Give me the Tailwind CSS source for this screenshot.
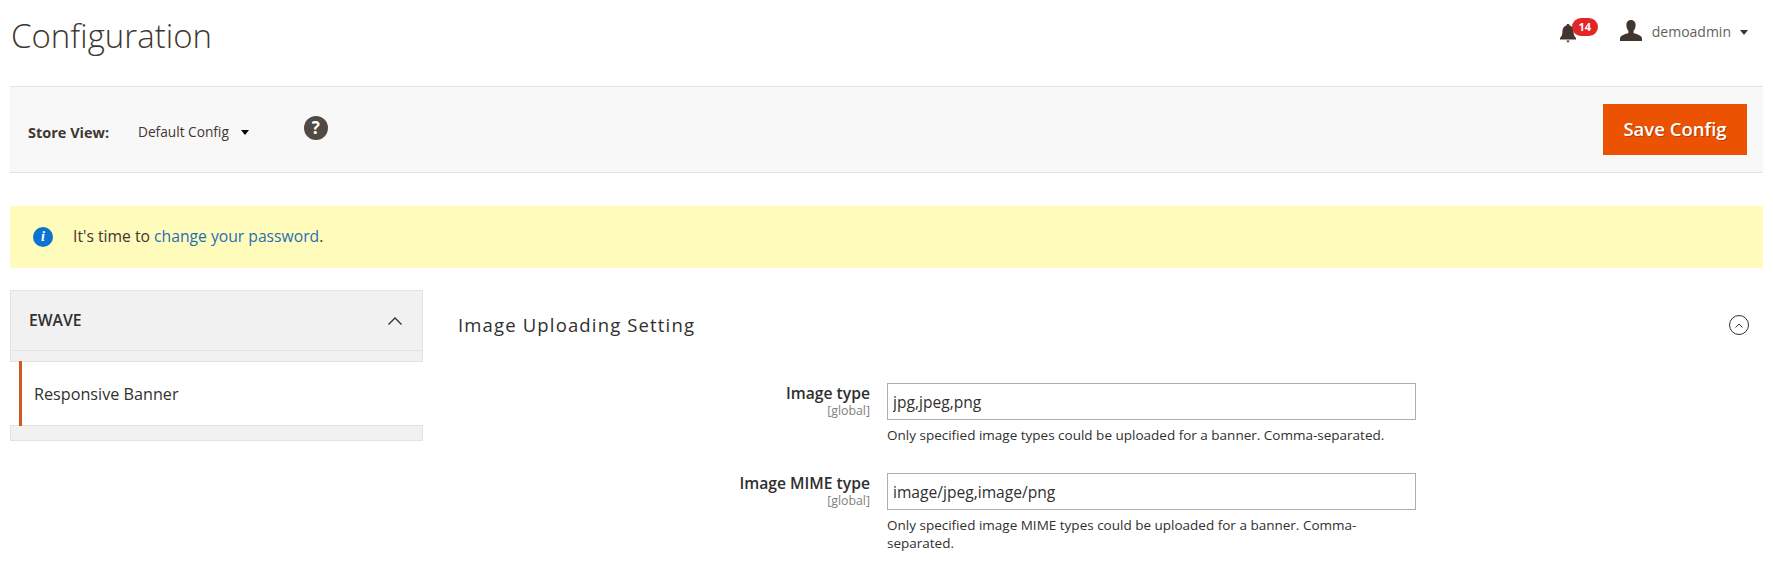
<!DOCTYPE html>
<html lang="en">
  <head>
    <meta charset="UTF-8" />
    <title>Configuration</title>
    <script src="https://cdn.jsdelivr.net/npm/@tailwindcss/browser@4"></script>
  </head>
  <body class="bg-white font-['Open_Sans',sans-serif] text-[#303030] overflow-hidden">
    <div class="w-[1773px] h-[572px] px-[10px]">
      <!-- Page header -->
      <header class="h-[86px] flex justify-between">
        <h1 class="pl-px pt-[13px] text-[33px] leading-[46px] font-light text-[#41362f]">Configuration</h1>
        <div class="flex items-start pt-[18px] pr-[15px]">
          <div class="relative w-[38px] h-[26px] mr-[22px]">
            <svg class="absolute left-0 top-[6px] w-4 h-[19px]" viewBox="0 0 16 19" fill="#41362f">
              <path d="M8 0c1 0 1.600.7 1.600 1.500C12.300 2.300 13.600 4.500 13.600 7.500c0 3.500.8 5 2.400 6.500v1.500H0V14c1.600-1.500 2.400-3 2.400-6.500 0-3 1.300-5.200 4-6C6.400.7 7 0 8 0zM6.200 16.500h3.600L8 18.800z" />
            </svg>
            <span class="absolute left-3 top-0 w-[26px] h-[18px] rounded-full bg-[#e22626] text-white text-[11px] leading-[18px] font-bold text-center">14</span>
          </div>
          <svg class="w-[22px] h-[21px] mt-[2px]" viewBox="0 0 22 21" fill="#41362f">
            <path d="M11 0c3 0 4.600 2.200 4.600 5.200 0 2.200-.8 4.300-2 5.500v2.200c2.400 1.100 8.400 2.200 8.400 5.500V21H0v-2.600c0-3.300 6-4.400 8.400-5.500v-2.200c-1.200-1.200-2-3.300-2-5.500C6.400 2.200 8 0 11 0z" />
          </svg>
          <span class="ml-[10px] mt-[4px] text-sm leading-[19px] text-[#676056]">demoadmin</span>
          <span class="ml-[9px] mt-[12px] w-0 h-0 border-x-[4.500px] border-x-transparent border-t-[5px] border-t-[#41362f]"></span>
        </div>
      </header>

      <!-- Action bar -->
      <div class="h-[87px] flex items-center justify-between bg-[#f8f8f8] border-y border-[#e3e3e3] pl-[18px] pr-[16px]">
        <div class="flex items-center">
          <span class="mt-[6px] text-[14.500px] font-bold text-[#41362f] w-[110px]">Store View:</span>
          <span class="mt-[6px] text-[13.700px] text-[#41362f]">Default Config</span>
          <span class="mt-[6px] ml-[12px] w-0 h-0 border-x-[4.500px] border-x-transparent border-t-[5px] border-t-black"></span>
          <span class="ml-[55px] mb-[3px] w-6 h-6 rounded-full bg-[#514943] text-white text-[17px] leading-6 font-bold text-center">?</span>
        </div>
        <button class="w-[144px] h-[51px] pb-[2px] bg-[#eb5202] text-white text-[18.500px] font-semibold [text-shadow:1px_1px_0_rgba(0,0,0,0.25)]">Save Config</button>
      </div>

      <!-- Notice -->
      <div class="mt-[33px] h-[62px] flex items-center bg-[#fffbbb] pl-[23px] text-[15.700px] text-[#41362f]">
        <span class="w-5 h-5 rounded-full bg-[#0c74d0] text-white text-[14px] leading-5 font-bold italic text-center font-['Liberation_Serif',serif]">i</span>
        <span class="ml-[20px]">It's time to <a class="text-[#1f6fb5]" href="#">change your password</a>.</span>
      </div>

      <div class="flex mt-[22px]">
        <!-- Sidebar -->
        <aside class="w-[413px] h-[151px] shrink-0 flex flex-col bg-[#f1f1f1] border border-[#e3e3e3]">
          <div class="h-[60px] flex items-center justify-between pl-[18px] pr-[20px] border-b border-[#e3e3e3]">
            <span class="text-[15.700px] font-semibold text-[#303030]">EWAVE</span>
            <svg class="w-[14px] h-2" viewBox="0 0 14 8" fill="none" stroke="#303030" stroke-width="1.300">
              <path d="M.5 7.500 7 1l6.500 6.500" />
            </svg>
          </div>
          <div class="-mx-px mt-[10px] h-[65px] flex bg-white border-y border-[#e3e3e3]">
            <div class="ml-[9px] -my-px pt-[2px] border-l-[3px] border-l-[#d4581e] pl-[12px] flex items-center text-[16.200px] text-[#303030]">Responsive Banner</div>
          </div>
        </aside>

        <!-- Section -->
        <main class="flex-1 ml-[35px]">
          <div class="flex items-center justify-between h-[70px] pr-[14px]">
            <h2 class="text-[18.500px] font-medium tracking-[1.150px] text-[#303030]">Image Uploading Setting</h2>
            <span class="w-5 h-5 flex items-center justify-center rounded-full border border-[#303030]">
              <svg class="w-2 h-[5px]" viewBox="0 0 8 5" fill="none" stroke="#303030" stroke-width="1">
                <path d="M.5 4.500 4 1l3.500 3.500" />
              </svg>
            </span>
          </div>

          <div class="mt-[23px] flex flex-col gap-[29px]">
            <div class="flex">
              <div class="w-[412px] text-right pt-px">
                <div class="text-[15.700px] leading-[19px] font-semibold">Image type</div>
                <div class="text-[12.300px] leading-[15px] text-[#808080]">[global]</div>
              </div>
              <div class="ml-[17px] w-[529px]">
                <input class="w-full h-[37px] border border-[#adadad] px-[5px] text-[15.600px] text-[#303030]" type="text" value="jpg,jpeg,png" />
                <p class="mt-[6px] text-[13.500px] leading-[18px] text-[#303030]">Only specified image types could be uploaded for a banner. Comma-separated.</p>
              </div>
            </div>
            <div class="flex">
              <div class="w-[412px] text-right pt-px">
                <div class="text-[15.700px] leading-[19px] font-semibold">Image MIME type</div>
                <div class="text-[12.300px] leading-[15px] text-[#808080]">[global]</div>
              </div>
              <div class="ml-[17px] w-[529px]">
                <input class="w-full h-[37px] border border-[#adadad] px-[5px] text-[15.600px] text-[#303030]" type="text" value="image/jpeg,image/png" />
                <p class="mt-[6px] text-[13.500px] leading-[18px] text-[#303030]">Only specified image MIME types could be uploaded for a banner. Comma-separated.</p>
              </div>
            </div>
          </div>
        </main>
      </div>
    </div>
  </body>
</html>
